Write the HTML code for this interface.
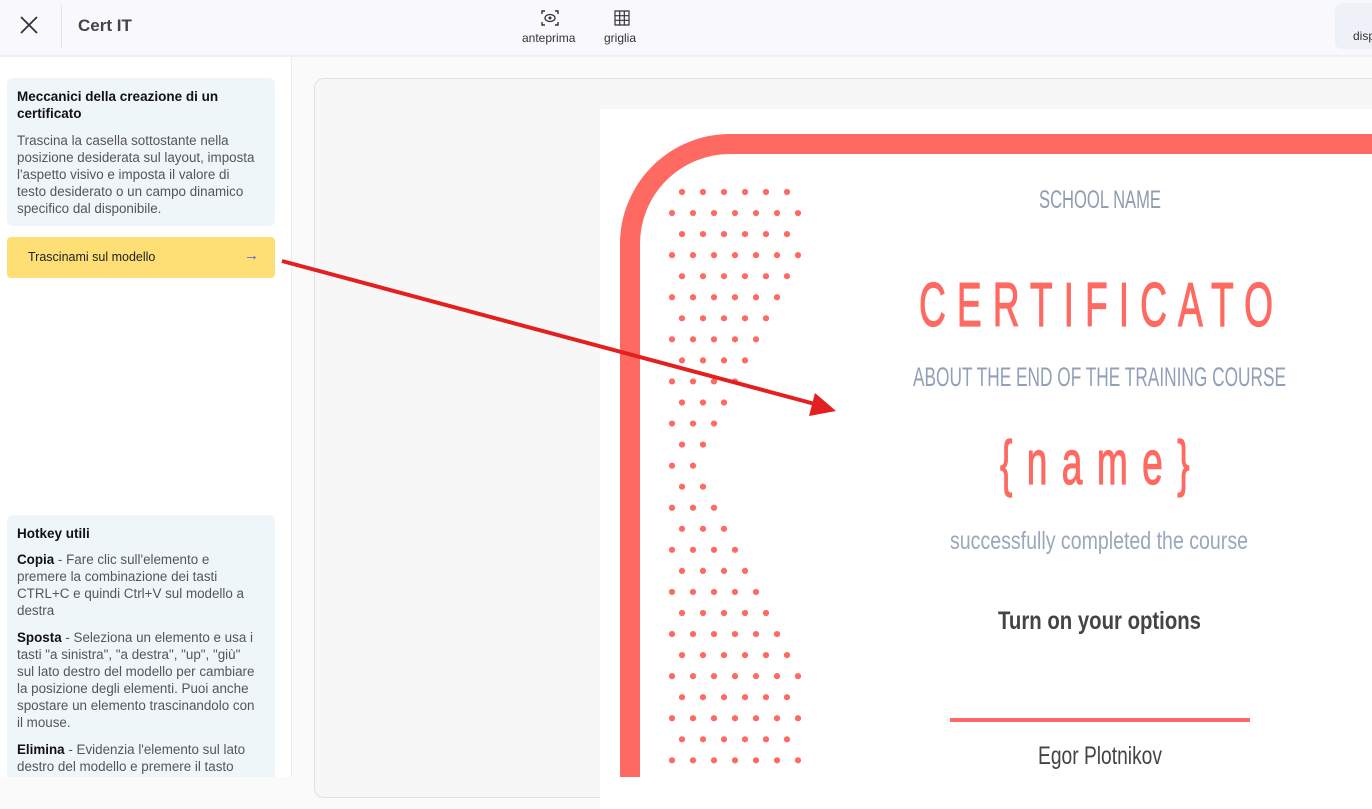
<!DOCTYPE html>
<html><head><meta charset="utf-8"><style>
*{margin:0;padding:0;box-sizing:border-box}
body{width:1372px;height:777px;overflow:hidden;font-family:"Liberation Sans",sans-serif;background:#fafafa;position:relative}
.hdr{position:absolute;left:0;top:0;width:1372px;height:57px;background:#f9f9fd;border-bottom:2px solid #f0f0f4}
.side{position:absolute;left:0;top:57px;width:292px;height:720px;background:#fff;border-right:1px solid #ececf0;overflow:hidden}
.box{position:absolute;left:7px;width:268px;background:#eff6fa;border-radius:6px;padding:10px 14px 10px 10px;color:#555;font-size:13.4px;line-height:17px}
.box h4{color:#111;font-size:13.5px;line-height:17px;margin-bottom:9px}
.box b{color:#111}
.box p{margin-bottom:10px}
</style></head><body>
<div class="hdr">
<svg style="position:absolute;left:19px;top:15px" width="20" height="20" viewBox="0 0 20 20"><path d="M2 2L18 18M18 2L2 18" stroke="#333" stroke-width="1.8"/></svg>
<div style="position:absolute;left:61px;top:5px;width:1px;height:43px;background:#e3e3e8"></div>
<div style="position:absolute;left:78px;top:16px;font-size:17px;color:#444;font-weight:bold">Cert IT</div>
<svg style="position:absolute;left:540px;top:9px" width="20" height="18" viewBox="0 0 20 18"><path d="M2 5V2h3M15 2h3v3M2 13v3h3M15 16h3v-3" stroke="#333" stroke-width="1.4" fill="none"/><ellipse cx="10" cy="9" rx="5" ry="3.5" stroke="#333" stroke-width="1.3" fill="none"/><circle cx="10" cy="9" r="1.5" fill="#333"/></svg>
<div style="position:absolute;left:522px;top:31px;font-size:12px;color:#333">anteprima</div>
<svg style="position:absolute;left:614px;top:10px" width="16" height="16" viewBox="0 0 16 16"><path d="M1 1h14v14H1zM5.7 1v14M10.3 1v14M1 5.7h14M1 10.3h14" stroke="#333" stroke-width="1.2" fill="none"/></svg>
<div style="position:absolute;left:604px;top:31px;font-size:12px;color:#333">griglia</div>
<div style="position:absolute;left:1335px;top:3px;width:60px;height:46px;background:#eef1f8;border-radius:7px"></div>
<div style="position:absolute;left:1353px;top:29px;font-size:12px;color:#333">disp</div>
</div>
<div class="side">
<div class="box" style="top:21px;height:148px">
<h4 style="margin-bottom:10px">Meccanici della creazione di un certificato</h4>
<p>Trascina la casella sottostante nella posizione desiderata sul layout, imposta l'aspetto visivo e imposta il valore di testo desiderato o un campo dinamico specifico dal disponibile.</p>
</div>
<div style="position:absolute;left:7px;top:180px;width:268px;height:41px;background:#fedf75;border-radius:4px;font-size:12.5px;color:#222;padding:13px 21px">Trascinami sul modello<span style="position:absolute;right:16px;top:10px;color:#4a63d8;font-size:15px">→</span></div>
<div class="box" style="top:458px;height:300px">
<h4>Hotkey utili</h4>
<p><b>Copia</b> - Fare clic sull'elemento e premere la combinazione dei tasti CTRL+C e quindi Ctrl+V sul modello a destra</p>
<p><b>Sposta</b> - Seleziona un elemento e usa i tasti "a sinistra", "a destra", "up", "giù" sul lato destro del modello per cambiare la posizione degli elementi. Puoi anche spostare un elemento trascinandolo con il mouse.</p>
<p><b>Elimina</b> - Evidenzia l'elemento sul lato destro del modello e premere il tasto</p>
</div>
</div>
<div style="position:absolute;left:314px;top:78px;width:1080px;height:720px;background:#f7f7f7;border:1px solid #dfdfe8;border-radius:10px"></div>
<div style="position:absolute;left:600px;top:109px;width:800px;height:700px;background:#fff"></div>
<svg style="position:absolute;left:0;top:0" width="1372" height="777" viewBox="0 0 1372 777">
<path d="M630 800V244a100 100 0 0 1 100-100H1400" stroke="#fe6a62" stroke-width="20" fill="none"/>
<g fill="#fe6a62" id="dots"></g>
<g font-family="'Liberation Sans Narrow','Liberation Sans',sans-serif" text-anchor="start">
<text x="1039" y="208" font-size="25" fill="#8e9cb0" textLength="122" lengthAdjust="spacingAndGlyphs">SCHOOL NAME</text>
<g transform="scale(0.6,1)"><text x="1531.7" y="326" font-size="62" fill="#fe6a62" stroke="#fe6a62" stroke-width="1.2" textLength="590" lengthAdjust="spacing">CERTIFICATO</text>
<text x="1666.7" y="484" font-size="62" fill="#fe6a62" stroke="#fe6a62" stroke-width="1.2" textLength="316" lengthAdjust="spacing">{name}</text></g>
<text x="913" y="386" font-size="27" fill="#8fa0b8" textLength="373" lengthAdjust="spacingAndGlyphs">ABOUT THE END OF THE TRAINING COURSE</text>
<text x="950" y="549" font-size="25" fill="#9aa8bb" textLength="298" lengthAdjust="spacingAndGlyphs">successfully completed the course</text>
<text x="998" y="629" font-size="25" font-weight="bold" fill="#444" textLength="203" lengthAdjust="spacingAndGlyphs">Turn on your options</text>
<text x="1038" y="764" font-size="25" fill="#444" textLength="124" lengthAdjust="spacingAndGlyphs">Egor Plotnikov</text>
</g>
<rect x="950" y="718" width="300" height="4" fill="#fe6a62"/>
<line x1="282" y1="261" x2="815" y2="404" stroke="#e41f1f" stroke-width="4"/>
<path d="M836 411L809 416L815 393Z" fill="#e41f1f"/>
</svg>
<script>
var c=[6,7,6,7,6,6,5,5,4,4,3,3,2,2,2,3,3,4,4,5,5,6,6,7,6,7,6,7],g=document.getElementById('dots'),s='';
for(var r=0;r<c.length;r++){var y=192+r*21.05,x0=r%2?672:682;for(var i=0;i<c[r];i++)s+='<circle cx="'+(x0+i*21)+'" cy="'+y+'" r="3.1"/>';}
g.innerHTML=s;
</script>
</body></html>
